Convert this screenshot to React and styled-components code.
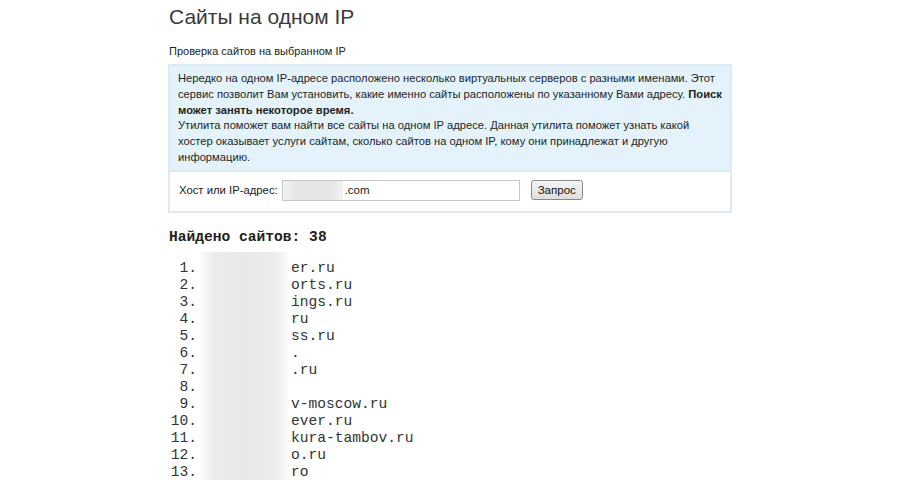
import React from "react";
import styled, { createGlobalStyle } from "styled-components";

const Global = createGlobalStyle`
  html, body { margin: 0; padding: 0; background: #fff; }
  body { overflow: hidden; }
`;

const Page = styled.div`
  width: 564px;
  margin: 0 auto;
  padding-top: 2px;
  font-family: "Liberation Sans", Arial, sans-serif;
  color: #222;
`;

const Title = styled.h1`
  margin: 0 0 0 1px;
  font-family: "Liberation Sans", Arial, sans-serif;
  font-weight: normal;
  font-size: 21px;
  line-height: 30px;
  color: #3a3a3a;
`;

const Subtitle = styled.div`
  margin: 12px 0 0 1px;
  font-size: 11px;
  line-height: 14px;
  color: #222;
`;

const Panel = styled.div`
  margin-top: 6px;
  border: 2px solid #dcebf2;
`;

const Info = styled.div`
  background: #e4f3fb;
  padding: 5px 2px 4px 8px;
  font-size: 11.2px;
  line-height: 15.8px;
  color: #1e1e1e;
  white-space: nowrap;
`;

const FormRow = styled.div`
  display: flex;
  align-items: center;
  background: #fff;
  border-top: 2px solid #dcebf2;
  padding: 8px 9px 10px 9px;
  font-size: 11.3px;
`;

const Label = styled.span`
  margin-right: 4px;
`;

const Input = styled.div`
  width: 236px;
  height: 19px;
  border: 1px solid #c6c6c6;
  display: flex;
  align-items: center;
  font-size: 11.5px;
  color: #222;
`;

const Blurred = styled.span`
  display: inline-block;
  width: 60px;
  height: 19px;
  background: linear-gradient(90deg, #f3f3f3, #e6e6e6 20%, #e6e6e6 80%, #f3f3f3);
  margin-right: 2px;
`;

const Button = styled.button`
  margin-left: 11px;
  height: 20px;
  padding: 0 6px;
  border: 1px solid #8a8a8a;
  border-radius: 3px;
  background: linear-gradient(#f6f6f6, #dedede);
  font-family: "Liberation Sans", Arial, sans-serif;
  font-size: 11.5px;
  color: #111;
`;

const Found = styled.div`
  margin-top: 15px;
  margin-left: 1px;
  font-family: "Liberation Mono", "Courier New", monospace;
  font-weight: bold;
  font-size: 14.6px;
  line-height: 18px;
  color: #222;
`;

const List = styled.div`
  margin-top: 14px;
  padding-bottom: 20px;
  display: grid;
  grid-template-columns: 29px 88px auto;
  column-gap: 3px;
  font-family: "Liberation Mono", "Courier New", monospace;
  font-size: 14.6px;
  line-height: 17px;
  color: #333;
`;

const Num = styled.span`
  text-align: right;
  grid-column: 1;
`;

const Smear = styled.div`
  grid-column: 2;
  grid-row: 1 / span 13;
  margin-top: -8px;
  margin-bottom: -20px;
  background: linear-gradient(90deg, #fdfdfd, #ececec 15%, #e8e8e8 50%, #ececec 85%, #fbfbfb);
`;

const Domain = styled.span`
  grid-column: 3;
  white-space: pre;
`;

const items = [
  "er.ru",
  "orts.ru",
  "ings.ru",
  "ru",
  "ss.ru",
  ".",
  ".ru",
  "",
  "v-moscow.ru",
  "ever.ru",
  "kura-tambov.ru",
  "o.ru",
  "ro",
];

export default function App() {
  return (
    <>
      <Global />
      <Page>
        <Title>Сайты на одном IP</Title>
        <Subtitle>Проверка сайтов на выбранном IP</Subtitle>
        <Panel>
          <Info>
            Нередко на одном IP-адресе расположено несколько виртуальных серверов с разными именами. Этот
            <br />
            сервис позволит Вам установить, какие именно сайты расположены по указанному Вами адресу.{" "}
            <b>Поиск</b>
            <br />
            <b>может занять некоторое время.</b>
            <br />
            Утилита поможет вам найти все сайты на одном IP адресе. Данная утилита поможет узнать какой
            <br />
            хостер оказывает услуги сайтам, сколько сайтов на одном IP, кому они принадлежат и другую
            <br />
            информацию.
          </Info>
          <FormRow>
            <Label>Хост или IP-адрес:</Label>
            <Input>
              <Blurred />
              .com
            </Input>
            <Button>Запрос</Button>
          </FormRow>
        </Panel>
        <Found>Найдено сайтов: 38</Found>
        <List>
          <Smear />
          {items.map((d, i) => (
            <React.Fragment key={i}>
              <Num style={{ gridRow: i + 1 }}>{i + 1}.</Num>
              <Domain style={{ gridRow: i + 1 }}>{d}</Domain>
            </React.Fragment>
          ))}
        </List>
      </Page>
    </>
  );
}
